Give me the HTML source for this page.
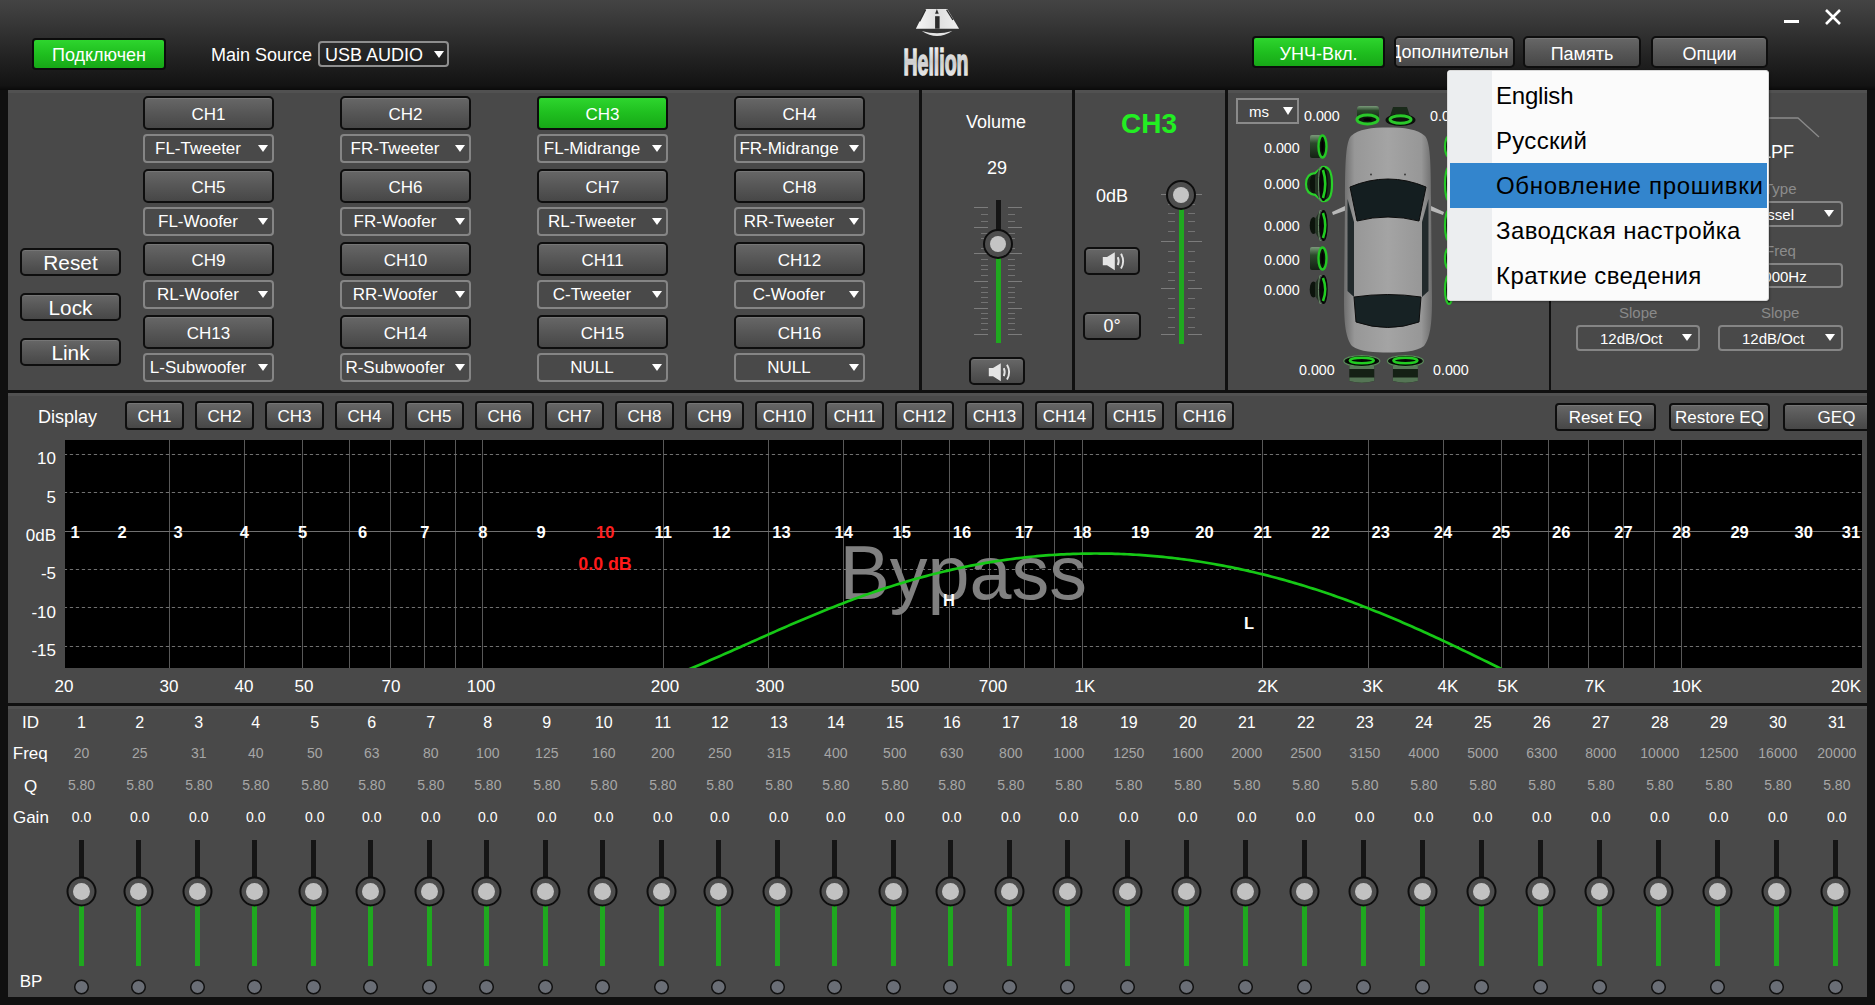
<!DOCTYPE html><html><head><meta charset="utf-8"><title>DSP</title><style>

*{box-sizing:border-box}
html,body{margin:0;padding:0}
body{width:1875px;height:1005px;overflow:hidden;position:relative;background:#101010;font-family:"Liberation Sans", sans-serif;color:#fff}
.abs{position:absolute}
.hdr{position:absolute;left:0;top:0;width:1875px;height:90px;background:linear-gradient(#444444 0%,#393939 22%,#2d2d2d 44%,#1f1f1f 70%,#131313 95%,#0a0a0a 100%)}
.panel{position:absolute;background:#494949;box-shadow:inset 0 3px 0 #515151}
.btn{position:absolute;border:2px solid #0e0e0e;border-radius:5px;background:linear-gradient(#676767 0%,#585858 45%,#474747 100%);box-shadow:inset 0 1px 0 rgba(255,255,255,0.1);color:#fff;text-align:center;white-space:nowrap;overflow:hidden}
.btn span{position:absolute;left:0;right:0;top:50%;transform:translateY(-50%);line-height:1}
.gbtn{position:absolute;border:2px solid #0c0c0c;border-radius:4px;background:linear-gradient(#2ed52e 0%,#1fbf1f 50%,#17a817 100%);color:#fff;text-align:center;white-space:nowrap}
.gbtn span{position:absolute;left:0;right:0;top:50%;transform:translateY(-50%);line-height:1}
.sel{position:absolute;border:2px solid #858585;border-radius:4px;color:#fff;white-space:nowrap}
.sel span{position:absolute;top:50%;transform:translateY(-50%);line-height:1}
.tri{position:absolute;width:0;height:0;border-left:5px solid transparent;border-right:5px solid transparent;border-top:7px solid #fff}
.t{position:absolute;white-space:nowrap;line-height:1}

</style></head><body>
<div class="hdr"></div>
<div class="gbtn" style="left:32px;top:38px;width:134px;height:32px;font-size:18px"><span style="margin-top:1px">Подключен</span></div>
<div class="t" style="left:211px;top:46px;font-size:18px">Main Source</div>
<div class="sel" style="left:318px;top:41px;width:131px;height:26px;border-color:#8e8e8e"><span style="left:5px;font-size:18px;margin-top:1px">USB AUDIO</span><div class="tri" style="left:114px;top:8px;border-top-width:7px"></div></div>
<svg class="abs" style="left:900px;top:0px" width="80" height="80" viewBox="900 0 80 80">
<defs><linearGradient id="lg1" x1="0" y1="0" x2="1" y2="0"><stop offset="0" stop-color="#f6f6f6"/><stop offset="0.5" stop-color="#dedede"/><stop offset="1" stop-color="#f0f0f0"/></linearGradient>
<linearGradient id="lg2" x1="0" y1="0" x2="0" y2="1"><stop offset="0" stop-color="#ffffff"/><stop offset="0.5" stop-color="#cfcfcf"/><stop offset="1" stop-color="#f2f2f2"/></linearGradient></defs>
<path d="M925.8 9 L947.3 9 L959.1 28.7 L915.9 28.7 Z" fill="url(#lg1)"/>
<path d="M925 9.4 L919 21.2 L920.3 21.6 L926.3 9.8 Z" fill="#2a2a2a"/>
<path d="M947.2 9.4 L953.6 19.7 L952.4 20.2 L946 9.9 Z" fill="#2a2a2a"/>
<path d="M935.1 13.7 L936.9 9 L938.7 13.7 Z" fill="#2a2a2a"/>
<rect x="935.1" y="16.2" width="4.5" height="12.5" fill="#2a2a2a"/>
<path d="M921.8 30.9 Q937 35.5 952.3 30.9 Q937 41 921.8 30.9 Z" fill="#e4e4e4"/>
<text x="936" y="74.8" text-anchor="middle" font-family="Liberation Sans" font-weight="bold" font-size="37.5" fill="url(#lg2)" stroke="url(#lg2)" stroke-width="1.6" transform="translate(936 0) scale(0.52 1) translate(-936 0)">Hellion</text>
</svg>
<div class="gbtn" style="left:1252px;top:36px;width:133px;height:32px;font-size:18px"><span style="margin-top:1.5px">УНЧ-Вкл.</span></div>
<div class="btn" style="left:1394px;top:36px;width:121px;height:32px;font-size:18px"><span style="left:-7px;right:auto;width:160px;text-align:left">Дополнительн</span></div>
<div class="btn" style="left:1523px;top:36px;width:118px;height:32px;font-size:18px"><span style="margin-top:1.5px">Память</span></div>
<div class="btn" style="left:1651px;top:36px;width:117px;height:32px;font-size:18px"><span style="margin-top:1.5px">Опции</span></div>
<div class="abs" style="left:1784px;top:20px;width:15px;height:3px;background:#fff"></div>
<svg class="abs" style="left:1824px;top:8px" width="18" height="18" viewBox="0 0 18 18"><path d="M2 2 L16 16 M16 2 L2 16" stroke="#fff" stroke-width="2.6"/></svg>
<div class="panel" style="left:8px;top:90px;width:911px;height:300px"></div>
<div class="panel" style="left:922px;top:90px;width:150px;height:300px"></div>
<div class="panel" style="left:1075px;top:90px;width:150px;height:300px"></div>
<div class="panel" style="left:1228px;top:90px;width:321px;height:300px"></div>
<div class="panel" style="left:1551px;top:90px;width:316px;height:300px"></div>
<div class="panel" style="left:8px;top:393px;width:1859px;height:310px"></div>
<div class="panel" style="left:8px;top:706px;width:1859px;height:291px"></div>
<div class="btn" style="left:20px;top:248px;width:101px;height:28px;font-size:20.8px"><span style="margin-top:0.5px">Reset</span></div>
<div class="btn" style="left:20px;top:293px;width:101px;height:28px;font-size:20.8px"><span style="margin-top:0.5px">Lock</span></div>
<div class="btn" style="left:20px;top:338px;width:101px;height:28px;font-size:20.8px"><span style="margin-top:0.5px">Link</span></div>
<div class="btn" style="left:143px;top:96px;width:131px;height:34px;font-size:17px"><span style="margin-top:0.5px">CH1</span></div>
<div class="sel" style="left:143px;top:134px;width:131px;height:29px"><span style="left:-1px;width:108px;text-align:center;font-size:17px;margin-top:-1px">FL-Tweeter</span><div class="tri" style="left:113px;top:9px"></div></div>
<div class="btn" style="left:340px;top:96px;width:131px;height:34px;font-size:17px"><span style="margin-top:0.5px">CH2</span></div>
<div class="sel" style="left:340px;top:134px;width:131px;height:29px"><span style="left:-1px;width:108px;text-align:center;font-size:17px;margin-top:-1px">FR-Tweeter</span><div class="tri" style="left:113px;top:9px"></div></div>
<div class="gbtn" style="left:537px;top:96px;width:131px;height:34px;font-size:17px"><span style="margin-top:0.5px">CH3</span></div>
<div class="sel" style="left:537px;top:134px;width:131px;height:29px"><span style="left:-1px;width:108px;text-align:center;font-size:17px;margin-top:-1px">FL-Midrange</span><div class="tri" style="left:113px;top:9px"></div></div>
<div class="btn" style="left:734px;top:96px;width:131px;height:34px;font-size:17px"><span style="margin-top:0.5px">CH4</span></div>
<div class="sel" style="left:734px;top:134px;width:131px;height:29px"><span style="left:-1px;width:108px;text-align:center;font-size:17px;margin-top:-1px">FR-Midrange</span><div class="tri" style="left:113px;top:9px"></div></div>
<div class="btn" style="left:143px;top:169px;width:131px;height:34px;font-size:17px"><span style="margin-top:0.5px">CH5</span></div>
<div class="sel" style="left:143px;top:207px;width:131px;height:29px"><span style="left:-1px;width:108px;text-align:center;font-size:17px;margin-top:-1px">FL-Woofer</span><div class="tri" style="left:113px;top:9px"></div></div>
<div class="btn" style="left:340px;top:169px;width:131px;height:34px;font-size:17px"><span style="margin-top:0.5px">CH6</span></div>
<div class="sel" style="left:340px;top:207px;width:131px;height:29px"><span style="left:-1px;width:108px;text-align:center;font-size:17px;margin-top:-1px">FR-Woofer</span><div class="tri" style="left:113px;top:9px"></div></div>
<div class="btn" style="left:537px;top:169px;width:131px;height:34px;font-size:17px"><span style="margin-top:0.5px">CH7</span></div>
<div class="sel" style="left:537px;top:207px;width:131px;height:29px"><span style="left:-1px;width:108px;text-align:center;font-size:17px;margin-top:-1px">RL-Tweeter</span><div class="tri" style="left:113px;top:9px"></div></div>
<div class="btn" style="left:734px;top:169px;width:131px;height:34px;font-size:17px"><span style="margin-top:0.5px">CH8</span></div>
<div class="sel" style="left:734px;top:207px;width:131px;height:29px"><span style="left:-1px;width:108px;text-align:center;font-size:17px;margin-top:-1px">RR-Tweeter</span><div class="tri" style="left:113px;top:9px"></div></div>
<div class="btn" style="left:143px;top:242px;width:131px;height:34px;font-size:17px"><span style="margin-top:0.5px">CH9</span></div>
<div class="sel" style="left:143px;top:280px;width:131px;height:29px"><span style="left:-1px;width:108px;text-align:center;font-size:17px;margin-top:-1px">RL-Woofer</span><div class="tri" style="left:113px;top:9px"></div></div>
<div class="btn" style="left:340px;top:242px;width:131px;height:34px;font-size:17px"><span style="margin-top:0.5px">CH10</span></div>
<div class="sel" style="left:340px;top:280px;width:131px;height:29px"><span style="left:-1px;width:108px;text-align:center;font-size:17px;margin-top:-1px">RR-Woofer</span><div class="tri" style="left:113px;top:9px"></div></div>
<div class="btn" style="left:537px;top:242px;width:131px;height:34px;font-size:17px"><span style="margin-top:0.5px">CH11</span></div>
<div class="sel" style="left:537px;top:280px;width:131px;height:29px"><span style="left:-1px;width:108px;text-align:center;font-size:17px;margin-top:-1px">C-Tweeter</span><div class="tri" style="left:113px;top:9px"></div></div>
<div class="btn" style="left:734px;top:242px;width:131px;height:34px;font-size:17px"><span style="margin-top:0.5px">CH12</span></div>
<div class="sel" style="left:734px;top:280px;width:131px;height:29px"><span style="left:-1px;width:108px;text-align:center;font-size:17px;margin-top:-1px">C-Woofer</span><div class="tri" style="left:113px;top:9px"></div></div>
<div class="btn" style="left:143px;top:315px;width:131px;height:34px;font-size:17px"><span style="margin-top:0.5px">CH13</span></div>
<div class="sel" style="left:143px;top:353px;width:131px;height:29px"><span style="left:-1px;width:108px;text-align:center;font-size:17px;margin-top:-1px">L-Subwoofer</span><div class="tri" style="left:113px;top:9px"></div></div>
<div class="btn" style="left:340px;top:315px;width:131px;height:34px;font-size:17px"><span style="margin-top:0.5px">CH14</span></div>
<div class="sel" style="left:340px;top:353px;width:131px;height:29px"><span style="left:-1px;width:108px;text-align:center;font-size:17px;margin-top:-1px">R-Subwoofer</span><div class="tri" style="left:113px;top:9px"></div></div>
<div class="btn" style="left:537px;top:315px;width:131px;height:34px;font-size:17px"><span style="margin-top:0.5px">CH15</span></div>
<div class="sel" style="left:537px;top:353px;width:131px;height:29px"><span style="left:-1px;width:108px;text-align:center;font-size:17px;margin-top:-1px">NULL</span><div class="tri" style="left:113px;top:9px"></div></div>
<div class="btn" style="left:734px;top:315px;width:131px;height:34px;font-size:17px"><span style="margin-top:0.5px">CH16</span></div>
<div class="sel" style="left:734px;top:353px;width:131px;height:29px"><span style="left:-1px;width:108px;text-align:center;font-size:17px;margin-top:-1px">NULL</span><div class="tri" style="left:113px;top:9px"></div></div>
<div class="t" style="left:966px;top:113px;font-size:18px">Volume</div>
<div class="t" style="left:987px;top:159px;font-size:18px">29</div>
<div class="abs" style="left:974px;top:207px;width:14px;height:1px;background:#7c7c7c"></div><div class="abs" style="left:1008px;top:207px;width:14px;height:1px;background:#7c7c7c"></div><div class="abs" style="left:974px;top:227px;width:14px;height:1px;background:#7c7c7c"></div><div class="abs" style="left:1008px;top:227px;width:14px;height:1px;background:#7c7c7c"></div><div class="abs" style="left:974px;top:253px;width:14px;height:1px;background:#7c7c7c"></div><div class="abs" style="left:1008px;top:253px;width:14px;height:1px;background:#7c7c7c"></div><div class="abs" style="left:974px;top:281px;width:14px;height:1px;background:#7c7c7c"></div><div class="abs" style="left:1008px;top:281px;width:14px;height:1px;background:#7c7c7c"></div><div class="abs" style="left:974px;top:308px;width:14px;height:1px;background:#7c7c7c"></div><div class="abs" style="left:1008px;top:308px;width:14px;height:1px;background:#7c7c7c"></div><div class="abs" style="left:974px;top:334px;width:14px;height:1px;background:#7c7c7c"></div><div class="abs" style="left:1008px;top:334px;width:14px;height:1px;background:#7c7c7c"></div><div class="abs" style="left:981px;top:214px;width:7px;height:1px;background:#727272"></div><div class="abs" style="left:1008px;top:214px;width:7px;height:1px;background:#727272"></div><div class="abs" style="left:981px;top:221px;width:7px;height:1px;background:#727272"></div><div class="abs" style="left:1008px;top:221px;width:7px;height:1px;background:#727272"></div><div class="abs" style="left:981px;top:233px;width:7px;height:1px;background:#727272"></div><div class="abs" style="left:1008px;top:233px;width:7px;height:1px;background:#727272"></div><div class="abs" style="left:981px;top:238px;width:7px;height:1px;background:#727272"></div><div class="abs" style="left:1008px;top:238px;width:7px;height:1px;background:#727272"></div><div class="abs" style="left:981px;top:248px;width:7px;height:1px;background:#727272"></div><div class="abs" style="left:1008px;top:248px;width:7px;height:1px;background:#727272"></div><div class="abs" style="left:981px;top:259px;width:7px;height:1px;background:#727272"></div><div class="abs" style="left:1008px;top:259px;width:7px;height:1px;background:#727272"></div><div class="abs" style="left:981px;top:265px;width:7px;height:1px;background:#727272"></div><div class="abs" style="left:1008px;top:265px;width:7px;height:1px;background:#727272"></div><div class="abs" style="left:981px;top:269px;width:7px;height:1px;background:#727272"></div><div class="abs" style="left:1008px;top:269px;width:7px;height:1px;background:#727272"></div><div class="abs" style="left:981px;top:275px;width:7px;height:1px;background:#727272"></div><div class="abs" style="left:1008px;top:275px;width:7px;height:1px;background:#727272"></div><div class="abs" style="left:981px;top:287px;width:7px;height:1px;background:#727272"></div><div class="abs" style="left:1008px;top:287px;width:7px;height:1px;background:#727272"></div><div class="abs" style="left:981px;top:292px;width:7px;height:1px;background:#727272"></div><div class="abs" style="left:1008px;top:292px;width:7px;height:1px;background:#727272"></div><div class="abs" style="left:981px;top:297px;width:7px;height:1px;background:#727272"></div><div class="abs" style="left:1008px;top:297px;width:7px;height:1px;background:#727272"></div><div class="abs" style="left:981px;top:302px;width:7px;height:1px;background:#727272"></div><div class="abs" style="left:1008px;top:302px;width:7px;height:1px;background:#727272"></div><div class="abs" style="left:981px;top:313px;width:7px;height:1px;background:#727272"></div><div class="abs" style="left:1008px;top:313px;width:7px;height:1px;background:#727272"></div><div class="abs" style="left:981px;top:318px;width:7px;height:1px;background:#727272"></div><div class="abs" style="left:1008px;top:318px;width:7px;height:1px;background:#727272"></div><div class="abs" style="left:981px;top:323px;width:7px;height:1px;background:#727272"></div><div class="abs" style="left:1008px;top:323px;width:7px;height:1px;background:#727272"></div><div class="abs" style="left:981px;top:329px;width:7px;height:1px;background:#727272"></div><div class="abs" style="left:1008px;top:329px;width:7px;height:1px;background:#727272"></div>
<div class="abs" style="left:996px;top:200px;width:5px;height:44px;background:#151515"></div>
<div class="abs" style="left:996px;top:244px;width:5px;height:99px;background:#1fa81f"></div>
<div class="abs" style="left:983px;top:229px;width:30px;height:30px;border-radius:50%;background:#4d4d4d;border:2.5px solid #0e0e0e"></div>
<div class="abs" style="left:990px;top:236px;width:16px;height:16px;border-radius:50%;background:#c4c4c4"></div>
<div class="btn" style="left:969px;top:357px;width:56px;height:28px"><div class="abs" style="left:17px;top:3.5px"><svg width="26" height="19" viewBox="0 0 26 19"><path d="M0.8 5 L5 5 L12.8 0.2 L12.8 18.3 L5 13.3 L0.8 13.3 Z" fill="#e4e4e4"/><path d="M15.8 5.2 Q17.6 9.2 15.8 13.2" stroke="#e4e4e4" stroke-width="1.9" fill="none"/><path d="M19 1.8 Q23.3 9.2 19 16.6" stroke="#e4e4e4" stroke-width="1.9" fill="none"/></svg></div></div>
<div class="t" style="left:1121px;top:110px;font-size:28px;font-weight:bold;color:#22ee22">CH3</div>
<div class="t" style="left:1096px;top:187px;font-size:18px">0dB</div>
<div class="abs" style="left:1161.0px;top:194px;width:14px;height:1px;background:#7c7c7c"></div><div class="abs" style="left:1188.0px;top:194px;width:14px;height:1px;background:#7c7c7c"></div><div class="abs" style="left:1161.0px;top:241px;width:14px;height:1px;background:#7c7c7c"></div><div class="abs" style="left:1188.0px;top:241px;width:14px;height:1px;background:#7c7c7c"></div><div class="abs" style="left:1161.0px;top:288px;width:14px;height:1px;background:#7c7c7c"></div><div class="abs" style="left:1188.0px;top:288px;width:14px;height:1px;background:#7c7c7c"></div><div class="abs" style="left:1161.0px;top:334px;width:14px;height:1px;background:#7c7c7c"></div><div class="abs" style="left:1188.0px;top:334px;width:14px;height:1px;background:#7c7c7c"></div><div class="abs" style="left:1168.0px;top:204px;width:7px;height:1px;background:#727272"></div><div class="abs" style="left:1188.0px;top:204px;width:7px;height:1px;background:#727272"></div><div class="abs" style="left:1168.0px;top:213px;width:7px;height:1px;background:#727272"></div><div class="abs" style="left:1188.0px;top:213px;width:7px;height:1px;background:#727272"></div><div class="abs" style="left:1168.0px;top:221px;width:7px;height:1px;background:#727272"></div><div class="abs" style="left:1188.0px;top:221px;width:7px;height:1px;background:#727272"></div><div class="abs" style="left:1168.0px;top:231px;width:7px;height:1px;background:#727272"></div><div class="abs" style="left:1188.0px;top:231px;width:7px;height:1px;background:#727272"></div><div class="abs" style="left:1168.0px;top:251px;width:7px;height:1px;background:#727272"></div><div class="abs" style="left:1188.0px;top:251px;width:7px;height:1px;background:#727272"></div><div class="abs" style="left:1168.0px;top:261px;width:7px;height:1px;background:#727272"></div><div class="abs" style="left:1188.0px;top:261px;width:7px;height:1px;background:#727272"></div><div class="abs" style="left:1168.0px;top:272px;width:7px;height:1px;background:#727272"></div><div class="abs" style="left:1188.0px;top:272px;width:7px;height:1px;background:#727272"></div><div class="abs" style="left:1168.0px;top:280px;width:7px;height:1px;background:#727272"></div><div class="abs" style="left:1188.0px;top:280px;width:7px;height:1px;background:#727272"></div><div class="abs" style="left:1168.0px;top:298px;width:7px;height:1px;background:#727272"></div><div class="abs" style="left:1188.0px;top:298px;width:7px;height:1px;background:#727272"></div><div class="abs" style="left:1168.0px;top:308px;width:7px;height:1px;background:#727272"></div><div class="abs" style="left:1188.0px;top:308px;width:7px;height:1px;background:#727272"></div><div class="abs" style="left:1168.0px;top:317px;width:7px;height:1px;background:#727272"></div><div class="abs" style="left:1188.0px;top:317px;width:7px;height:1px;background:#727272"></div><div class="abs" style="left:1168.0px;top:327px;width:7px;height:1px;background:#727272"></div><div class="abs" style="left:1188.0px;top:327px;width:7px;height:1px;background:#727272"></div>
<div class="abs" style="left:1179px;top:195px;width:5px;height:149px;background:#1fa81f"></div>
<div class="abs" style="left:1166px;top:180px;width:30px;height:30px;border-radius:50%;background:#4d4d4d;border:2.5px solid #0e0e0e"></div>
<div class="abs" style="left:1173px;top:187px;width:16px;height:16px;border-radius:50%;background:#c4c4c4"></div>
<div class="btn" style="left:1084px;top:247px;width:56px;height:28px"><div class="abs" style="left:16px;top:3px"><svg width="26" height="19" viewBox="0 0 26 19"><path d="M0.8 5 L5 5 L12.8 0.2 L12.8 18.3 L5 13.3 L0.8 13.3 Z" fill="#e4e4e4"/><path d="M15.8 5.2 Q17.6 9.2 15.8 13.2" stroke="#e4e4e4" stroke-width="1.9" fill="none"/><path d="M19 1.8 Q23.3 9.2 19 16.6" stroke="#e4e4e4" stroke-width="1.9" fill="none"/></svg></div></div>
<div class="btn" style="left:1083px;top:312px;width:58px;height:28px;font-size:18px"><span>0°</span></div>
<div class="sel" style="left:1236px;top:98px;width:63px;height:26px;border-color:#8a8a8a;border-radius:0"><span style="left:11px;font-size:15px">ms</span><div class="tri" style="left:45px;top:6.5px;border-top-width:8px"></div></div>
<div class="t" style="left:1304px;top:109px;font-size:14.3px">0.000</div>
<div class="t" style="left:1430px;top:109px;font-size:14.3px">0.000</div>
<div class="t" style="left:1264px;top:141px;font-size:14.3px">0.000</div>
<div class="t" style="left:1264px;top:177px;font-size:14.3px">0.000</div>
<div class="t" style="left:1264px;top:219px;font-size:14.3px">0.000</div>
<div class="t" style="left:1264px;top:253px;font-size:14.3px">0.000</div>
<div class="t" style="left:1264px;top:283px;font-size:14.3px">0.000</div>
<div class="t" style="left:1299px;top:363px;font-size:14.3px">0.000</div>
<div class="t" style="left:1433px;top:363px;font-size:14.3px">0.000</div>
<svg class="abs" style="left:1300px;top:95px" width="170" height="300" viewBox="1300 95 170 300">
<defs>
<linearGradient id="cg" x1="0" y1="0" x2="1" y2="0"><stop offset="0" stop-color="#6e6e6e"/><stop offset="0.12" stop-color="#979797"/><stop offset="0.5" stop-color="#a4a4a4"/><stop offset="0.88" stop-color="#979797"/><stop offset="1" stop-color="#6e6e6e"/></linearGradient>
<linearGradient id="sg" x1="0" y1="0" x2="0" y2="1"><stop offset="0" stop-color="#7a9a7a"/><stop offset="0.35" stop-color="#2c4a2c"/><stop offset="1" stop-color="#142214"/></linearGradient>
<linearGradient id="sg2" x1="0" y1="0" x2="1" y2="0"><stop offset="0" stop-color="#7a9a7a"/><stop offset="0.4" stop-color="#2c4a2c"/><stop offset="1" stop-color="#142214"/></linearGradient>
</defs>
<path d="M1345 206 L1332 212 L1333 215 L1347 210 Z" fill="#b8b8b8"/>
<path d="M1431 206 L1444 212 L1443 215 L1429 210 Z" fill="#b8b8b8"/>
<path d="M1388 127.5 C1372 127.5 1358 129 1351 136 C1346 142 1345 160 1345 200 L1344 300 C1344 325 1346 338 1352 346 C1360 352 1375 352.5 1388 352.5 C1401 352.5 1416 352 1424 346 C1430 338 1432 325 1432 300 L1431 200 C1431 160 1430 142 1425 136 C1418 129 1404 127.5 1388 127.5 Z" fill="url(#cg)"/>
<path d="M1350 187 Q1388 171 1426 187 L1419 221 Q1388 213 1357 221 Z" fill="#141e20" stroke="#0c0c0c" stroke-width="1"/>
<path d="M1347.5 199 L1354 222 L1354 297 L1347.5 291 Z" fill="#222a2c"/>
<path d="M1428.5 199 L1422 222 L1422 297 L1428.5 291 Z" fill="#222a2c"/>
<path d="M1354 297 Q1388 292 1421 297 L1419 322 Q1388 333 1356 322 Z" fill="#172224" stroke="#0c0c0c" stroke-width="1"/>
<circle cx="1371" cy="174.5" r="0.9" fill="#333"/><circle cx="1405" cy="174.5" r="0.9" fill="#333"/>

<rect x="1310" y="135" width="11" height="23" rx="2" fill="url(#sg)"/><ellipse cx="1322.5" cy="146.5" rx="4" ry="11.0" fill="#0a120a" stroke="#24c824" stroke-width="2.4"/><ellipse cx="1322.5" cy="146.5" rx="1.2" ry="6.5" fill="#000"/><path d="M1306 184.0 Q1306 173.92 1315 173.2 L1322 167 Q1332 165 1332 184.0 Q1332 203 1322 201 L1315 194.8 Q1306 194.08 1306 184.0 Z" fill="#1a2a1a" stroke="#2ad02a" stroke-width="2.2"/><ellipse cx="1313.5" cy="184.0" rx="3.8" ry="9.36" fill="#0c140c"/><path d="M1315 176.8 L1320 167.5 L1320 200.5 L1315 191.2 Z" fill="#243424"/><ellipse cx="1320.5" cy="184.0" rx="2" ry="17.0" fill="none" stroke="#6a8a6a" stroke-width="1"/><ellipse cx="1323.5" cy="184.0" rx="3.6" ry="16.5" fill="#060806" stroke="#080808" stroke-width="1.2"/><path d="M1323 170 Q1327.5 184.0 1323 198" fill="none" stroke="#22cc22" stroke-width="2.6"/><ellipse cx="1313.5" cy="225.5" rx="3.8" ry="8.58" fill="#0c140c"/><path d="M1315 218.9 L1320 210.5 L1320 240.5 L1315 232.1 Z" fill="#243424"/><ellipse cx="1320.5" cy="225.5" rx="2" ry="15.5" fill="none" stroke="#6a8a6a" stroke-width="1"/><ellipse cx="1323.5" cy="225.5" rx="3.6" ry="15.0" fill="#060806" stroke="#080808" stroke-width="1.2"/><path d="M1323 213 Q1327.5 225.5 1323 238" fill="none" stroke="#22cc22" stroke-width="2.6"/><rect x="1310" y="247" width="11" height="23" rx="2" fill="url(#sg)"/><ellipse cx="1322.5" cy="258.5" rx="4" ry="11.0" fill="#0a120a" stroke="#24c824" stroke-width="2.4"/><ellipse cx="1322.5" cy="258.5" rx="1.2" ry="6.5" fill="#000"/><ellipse cx="1313.5" cy="289.5" rx="3.8" ry="8.06" fill="#0c140c"/><path d="M1315 283.3 L1320 275.5 L1320 303.5 L1315 295.7 Z" fill="#243424"/><ellipse cx="1320.5" cy="289.5" rx="2" ry="14.5" fill="none" stroke="#6a8a6a" stroke-width="1"/><ellipse cx="1323.5" cy="289.5" rx="3.6" ry="14.0" fill="#060806" stroke="#080808" stroke-width="1.2"/><path d="M1323 278 Q1327.5 289.5 1323 301" fill="none" stroke="#22cc22" stroke-width="2.6"/><ellipse cx="1449" cy="146.5" rx="4" ry="10.5" fill="#0c140c" stroke="#24c824" stroke-width="2.2"/><ellipse cx="1449" cy="184.0" rx="4" ry="17.0" fill="#0c140c" stroke="#24c824" stroke-width="2.2"/><ellipse cx="1449" cy="225.5" rx="4" ry="15.5" fill="#0c140c" stroke="#24c824" stroke-width="2.2"/><ellipse cx="1449" cy="258.5" rx="4" ry="10.5" fill="#0c140c" stroke="#24c824" stroke-width="2.2"/><ellipse cx="1449" cy="289.5" rx="4" ry="14.5" fill="#0c140c" stroke="#24c824" stroke-width="2.2"/><rect x="1357" y="106" width="22" height="13" rx="3" fill="url(#sg)"/><ellipse cx="1367.5" cy="119.5" rx="10.5" ry="4.5" fill="#0c140c" stroke="#2ac82a" stroke-width="3"/><ellipse cx="1367.5" cy="119.5" rx="4" ry="1.5" fill="#000"/><path d="M1393 107 L1407 107 L1410 116 L1390 116 Z" fill="#1a2a1a"/><ellipse cx="1400.5" cy="120" rx="15" ry="6" fill="#0a0f0a"/><ellipse cx="1400.5" cy="119.5" rx="10.5" ry="3.8" fill="#0c140c" stroke="#2ac82a" stroke-width="3"/><path d="M1349.3 365 L1374.3 365 L1374.3 381 Q1361.8 384.5 1349.3 381 Z" fill="#142014"/><rect x="1349.3" y="365.5" width="25" height="3.5" fill="#5a7a5a"/><path d="M1349.3 377.5 L1374.3 377.5 L1374.3 381 Q1361.8 384.5 1349.3 381 Z" fill="#557555"/><ellipse cx="1361.8" cy="361" rx="18" ry="5.5" fill="#0a120a" stroke="#5a8a5a" stroke-width="1.2"/><ellipse cx="1361.8" cy="361" rx="15.5" ry="4.3" fill="#050505"/><ellipse cx="1361.8" cy="360.5" rx="12" ry="2.8" fill="none" stroke="#22cc22" stroke-width="2.6"/><path d="M1392.9 365 L1417.9 365 L1417.9 381 Q1405.4 384.5 1392.9 381 Z" fill="#142014"/><rect x="1392.9" y="365.5" width="25" height="3.5" fill="#5a7a5a"/><path d="M1392.9 377.5 L1417.9 377.5 L1417.9 381 Q1405.4 384.5 1392.9 381 Z" fill="#557555"/><ellipse cx="1405.4" cy="361" rx="18" ry="5.5" fill="#0a120a" stroke="#5a8a5a" stroke-width="1.2"/><ellipse cx="1405.4" cy="361" rx="15.5" ry="4.3" fill="#050505"/><ellipse cx="1405.4" cy="360.5" rx="12" ry="2.8" fill="none" stroke="#22cc22" stroke-width="2.6"/></svg>
<svg class="abs" style="left:1760px;top:110px" width="70" height="35"><path d="M0 8 L38 8 L59 27" stroke="#8a8a8a" stroke-width="1.3" fill="none"/></svg>
<div class="t" style="left:1761px;top:143px;font-size:18px">LPF</div>
<div class="t" style="left:1764px;top:181px;font-size:15px;color:#8c8c8c">Type</div>
<div class="sel" style="left:1718px;top:201px;width:125px;height:26px"><span style="left:29px;font-size:15px">Bessel</span><div class="tri" style="left:104px;top:7px"></div></div>
<div class="t" style="left:1765px;top:243px;font-size:15px;color:#8c8c8c">Freq</div>
<div class="sel" style="left:1718px;top:263px;width:125px;height:25px"><span style="left:35px;font-size:15px">2000Hz</span></div>
<div class="t" style="left:1619px;top:305px;font-size:15px;color:#8a8a8a">Slope</div>
<div class="t" style="left:1761px;top:305px;font-size:15px;color:#8a8a8a">Slope</div>
<div class="sel" style="left:1576px;top:325px;width:124px;height:26px"><span style="left:22px;font-size:15px">12dB/Oct</span><div class="tri" style="left:104px;top:7px"></div></div>
<div class="sel" style="left:1718px;top:325px;width:125px;height:26px"><span style="left:22px;font-size:15px">12dB/Oct</span><div class="tri" style="left:105px;top:7px"></div></div>
<div class="abs" style="left:1447px;top:70px;width:322px;height:231px;background:#fbfbfb;border:1px solid #d8d8d8;border-radius:3px;box-shadow:1px 1px 2px rgba(0,0,0,0.3)"></div>
<div class="abs" style="left:1448px;top:71px;width:44px;height:229px;background:#eceef0"></div>
<div class="abs" style="left:1450px;top:163px;width:317px;height:45px;background:#3385cd"></div>
<div class="t" style="left:1496px;top:84px;font-size:24px;color:#000;letter-spacing:-0.2px">English</div>
<div class="t" style="left:1496px;top:129px;font-size:24px;color:#000;letter-spacing:0.3px">Русский</div>
<div class="t" style="left:1496px;top:174px;font-size:24px;color:#000;letter-spacing:0.7px">Обновление прошивки</div>
<div class="t" style="left:1496px;top:219px;font-size:24px;color:#000;letter-spacing:0.4px">Заводская настройка</div>
<div class="t" style="left:1496px;top:264px;font-size:24px;color:#000;letter-spacing:0.4px">Краткие сведения</div>
<div class="t" style="left:38px;top:408px;font-size:18px">Display</div>
<div class="btn" style="left:125px;top:401px;width:59px;height:29px;font-size:17px;border-radius:4px"><span>CH1</span></div>
<div class="btn" style="left:195px;top:401px;width:59px;height:29px;font-size:17px;border-radius:4px"><span>CH2</span></div>
<div class="btn" style="left:265px;top:401px;width:59px;height:29px;font-size:17px;border-radius:4px"><span>CH3</span></div>
<div class="btn" style="left:335px;top:401px;width:59px;height:29px;font-size:17px;border-radius:4px"><span>CH4</span></div>
<div class="btn" style="left:405px;top:401px;width:59px;height:29px;font-size:17px;border-radius:4px"><span>CH5</span></div>
<div class="btn" style="left:475px;top:401px;width:59px;height:29px;font-size:17px;border-radius:4px"><span>CH6</span></div>
<div class="btn" style="left:545px;top:401px;width:59px;height:29px;font-size:17px;border-radius:4px"><span>CH7</span></div>
<div class="btn" style="left:615px;top:401px;width:59px;height:29px;font-size:17px;border-radius:4px"><span>CH8</span></div>
<div class="btn" style="left:685px;top:401px;width:59px;height:29px;font-size:17px;border-radius:4px"><span>CH9</span></div>
<div class="btn" style="left:755px;top:401px;width:59px;height:29px;font-size:17px;border-radius:4px"><span>CH10</span></div>
<div class="btn" style="left:825px;top:401px;width:59px;height:29px;font-size:17px;border-radius:4px"><span>CH11</span></div>
<div class="btn" style="left:895px;top:401px;width:59px;height:29px;font-size:17px;border-radius:4px"><span>CH12</span></div>
<div class="btn" style="left:965px;top:401px;width:59px;height:29px;font-size:17px;border-radius:4px"><span>CH13</span></div>
<div class="btn" style="left:1035px;top:401px;width:59px;height:29px;font-size:17px;border-radius:4px"><span>CH14</span></div>
<div class="btn" style="left:1105px;top:401px;width:59px;height:29px;font-size:17px;border-radius:4px"><span>CH15</span></div>
<div class="btn" style="left:1175px;top:401px;width:59px;height:29px;font-size:17px;border-radius:4px"><span>CH16</span></div>
<div class="btn" style="left:1555px;top:403px;width:101px;height:28px;font-size:17px;border-radius:4px"><span>Reset EQ</span></div>
<div class="btn" style="left:1669px;top:403px;width:101px;height:28px;font-size:17px;border-radius:4px"><span>Restore EQ</span></div>
<div class="btn" style="left:1783px;top:403px;width:100px;height:28px;font-size:17px;border-radius:4px"><span style="left:0;right:auto;width:103px">GEQ</span></div>
<div class="abs" style="left:1867px;top:393px;width:8px;height:612px;background:#101010"></div>
<svg class="abs" style="left:0;top:0" width="1875" height="1005" viewBox="0 0 1875 1005"><rect x="65" y="440" width="1797" height="228" fill="#000"/><line x1="169.5" y1="440" x2="169.5" y2="668" stroke="#585858" stroke-width="1"/><line x1="244.5" y1="440" x2="244.5" y2="668" stroke="#585858" stroke-width="1"/><line x1="302.5" y1="440" x2="302.5" y2="668" stroke="#585858" stroke-width="1"/><line x1="349.5" y1="440" x2="349.5" y2="668" stroke="#585858" stroke-width="1"/><line x1="390.5" y1="440" x2="390.5" y2="668" stroke="#585858" stroke-width="1"/><line x1="424.5" y1="440" x2="424.5" y2="668" stroke="#585858" stroke-width="1"/><line x1="455.5" y1="440" x2="455.5" y2="668" stroke="#585858" stroke-width="1"/><line x1="482.5" y1="440" x2="482.5" y2="668" stroke="#585858" stroke-width="1"/><line x1="663.5" y1="440" x2="663.5" y2="668" stroke="#585858" stroke-width="1"/><line x1="768.5" y1="440" x2="768.5" y2="668" stroke="#585858" stroke-width="1"/><line x1="843.5" y1="440" x2="843.5" y2="668" stroke="#585858" stroke-width="1"/><line x1="901.5" y1="440" x2="901.5" y2="668" stroke="#585858" stroke-width="1"/><line x1="949.5" y1="440" x2="949.5" y2="668" stroke="#585858" stroke-width="1"/><line x1="989.5" y1="440" x2="989.5" y2="668" stroke="#585858" stroke-width="1"/><line x1="1024.5" y1="440" x2="1024.5" y2="668" stroke="#585858" stroke-width="1"/><line x1="1054.5" y1="440" x2="1054.5" y2="668" stroke="#585858" stroke-width="1"/><line x1="1082.5" y1="440" x2="1082.5" y2="668" stroke="#585858" stroke-width="1"/><line x1="1262.5" y1="440" x2="1262.5" y2="668" stroke="#585858" stroke-width="1"/><line x1="1368.5" y1="440" x2="1368.5" y2="668" stroke="#585858" stroke-width="1"/><line x1="1443.5" y1="440" x2="1443.5" y2="668" stroke="#585858" stroke-width="1"/><line x1="1501.5" y1="440" x2="1501.5" y2="668" stroke="#585858" stroke-width="1"/><line x1="1548.5" y1="440" x2="1548.5" y2="668" stroke="#585858" stroke-width="1"/><line x1="1588.5" y1="440" x2="1588.5" y2="668" stroke="#585858" stroke-width="1"/><line x1="1623.5" y1="440" x2="1623.5" y2="668" stroke="#585858" stroke-width="1"/><line x1="1654.5" y1="440" x2="1654.5" y2="668" stroke="#585858" stroke-width="1"/><line x1="1681.5" y1="440" x2="1681.5" y2="668" stroke="#585858" stroke-width="1"/><line x1="65" y1="454.5" x2="1862" y2="454.5" stroke="#707070" stroke-width="1" stroke-dasharray="3.3 2.7" stroke-dashoffset="1.2"/><line x1="65" y1="492.5" x2="1862" y2="492.5" stroke="#707070" stroke-width="1" stroke-dasharray="3.3 2.7" stroke-dashoffset="1.2"/><line x1="65" y1="569.5" x2="1862" y2="569.5" stroke="#707070" stroke-width="1" stroke-dasharray="3.3 2.7" stroke-dashoffset="1.2"/><line x1="65" y1="607.5" x2="1862" y2="607.5" stroke="#707070" stroke-width="1" stroke-dasharray="3.3 2.7" stroke-dashoffset="1.2"/><line x1="65" y1="646.5" x2="1862" y2="646.5" stroke="#707070" stroke-width="1" stroke-dasharray="3.3 2.7" stroke-dashoffset="1.2"/><line x1="65" y1="531.5" x2="1862" y2="531.5" stroke="#707070" stroke-width="1"/><text x="839.5" y="598.5" font-family="Liberation Sans" font-size="75.5" fill="#808080">Bypass</text><defs><clipPath id="plot"><rect x="65" y="440" width="1797" height="228"/></clipPath></defs><path d="M686.0 670.35 L689.0 669.14 L692.0 667.92 L695.0 666.69 L698.0 665.44 L701.0 664.18 L704.0 662.91 L707.0 661.64 L710.0 660.35 L713.0 659.06 L716.0 657.76 L719.0 656.45 L722.0 655.13 L725.0 653.82 L728.0 652.49 L731.0 651.16 L734.0 649.83 L737.0 648.50 L740.0 647.16 L743.0 645.82 L746.0 644.48 L749.0 643.14 L752.0 641.80 L755.0 640.46 L758.0 639.12 L761.0 637.78 L764.0 636.45 L767.0 635.11 L770.0 633.78 L773.0 632.45 L776.0 631.13 L779.0 629.81 L782.0 628.49 L785.0 627.18 L788.0 625.88 L791.0 624.58 L794.0 623.28 L797.0 622.00 L800.0 620.71 L803.0 619.44 L806.0 618.17 L809.0 616.91 L812.0 615.66 L815.0 614.42 L818.0 613.18 L821.0 611.96 L824.0 610.74 L827.0 609.53 L830.0 608.33 L833.0 607.14 L836.0 605.97 L839.0 604.80 L842.0 603.64 L845.0 602.49 L848.0 601.35 L851.0 600.23 L854.0 599.11 L857.0 598.01 L860.0 596.92 L863.0 595.84 L866.0 594.77 L869.0 593.71 L872.0 592.67 L875.0 591.64 L878.0 590.62 L881.0 589.61 L884.0 588.61 L887.0 587.63 L890.0 586.66 L893.0 585.71 L896.0 584.77 L899.0 583.84 L902.0 582.92 L905.0 582.02 L908.0 581.13 L911.0 580.25 L914.0 579.39 L917.0 578.54 L920.0 577.71 L923.0 576.89 L926.0 576.08 L929.0 575.29 L932.0 574.51 L935.0 573.74 L938.0 572.99 L941.0 572.25 L944.0 571.53 L947.0 570.82 L950.0 570.12 L953.0 569.44 L956.0 568.78 L959.0 568.13 L962.0 567.49 L965.0 566.86 L968.0 566.25 L971.0 565.66 L974.0 565.08 L977.0 564.51 L980.0 563.96 L983.0 563.42 L986.0 562.90 L989.0 562.39 L992.0 561.90 L995.0 561.41 L998.0 560.95 L1001.0 560.50 L1004.0 560.06 L1007.0 559.64 L1010.0 559.23 L1013.0 558.83 L1016.0 558.45 L1019.0 558.09 L1022.0 557.74 L1025.0 557.40 L1028.0 557.07 L1031.0 556.77 L1034.0 556.47 L1037.0 556.19 L1040.0 555.92 L1043.0 555.67 L1046.0 555.43 L1049.0 555.21 L1052.0 555.00 L1055.0 554.80 L1058.0 554.62 L1061.0 554.45 L1064.0 554.30 L1067.0 554.16 L1070.0 554.03 L1073.0 553.92 L1076.0 553.82 L1079.0 553.73 L1082.0 553.66 L1085.0 553.61 L1088.0 553.56 L1091.0 553.54 L1094.0 553.52 L1097.0 553.52 L1100.0 553.53 L1103.0 553.56 L1106.0 553.60 L1109.0 553.65 L1112.0 553.72 L1115.0 553.80 L1118.0 553.89 L1121.0 554.00 L1124.0 554.12 L1127.0 554.26 L1130.0 554.40 L1133.0 554.57 L1136.0 554.74 L1139.0 554.93 L1142.0 555.13 L1145.0 555.35 L1148.0 555.58 L1151.0 555.82 L1154.0 556.08 L1157.0 556.35 L1160.0 556.63 L1163.0 556.93 L1166.0 557.24 L1169.0 557.56 L1172.0 557.90 L1175.0 558.25 L1178.0 558.61 L1181.0 558.99 L1184.0 559.38 L1187.0 559.78 L1190.0 560.20 L1193.0 560.63 L1196.0 561.08 L1199.0 561.53 L1202.0 562.00 L1205.0 562.49 L1208.0 562.98 L1211.0 563.49 L1214.0 564.02 L1217.0 564.55 L1220.0 565.10 L1223.0 565.66 L1226.0 566.24 L1229.0 566.83 L1232.0 567.43 L1235.0 568.05 L1238.0 568.68 L1241.0 569.32 L1244.0 569.97 L1247.0 570.64 L1250.0 571.32 L1253.0 572.02 L1256.0 572.72 L1259.0 573.44 L1262.0 574.18 L1265.0 574.92 L1268.0 575.68 L1271.0 576.46 L1274.0 577.24 L1277.0 578.04 L1280.0 578.85 L1283.0 579.67 L1286.0 580.51 L1289.0 581.36 L1292.0 582.22 L1295.0 583.10 L1298.0 583.99 L1301.0 584.89 L1304.0 585.80 L1307.0 586.73 L1310.0 587.67 L1313.0 588.62 L1316.0 589.58 L1319.0 590.56 L1322.0 591.54 L1325.0 592.55 L1328.0 593.56 L1331.0 594.58 L1334.0 595.62 L1337.0 596.67 L1340.0 597.73 L1343.0 598.81 L1346.0 599.89 L1349.0 600.99 L1352.0 602.10 L1355.0 603.22 L1358.0 604.35 L1361.0 605.49 L1364.0 606.65 L1367.0 607.81 L1370.0 608.99 L1373.0 610.18 L1376.0 611.38 L1379.0 612.59 L1382.0 613.81 L1385.0 615.04 L1388.0 616.28 L1391.0 617.53 L1394.0 618.79 L1397.0 620.06 L1400.0 621.35 L1403.0 622.64 L1406.0 623.94 L1409.0 625.25 L1412.0 626.57 L1415.0 627.89 L1418.0 629.23 L1421.0 630.58 L1424.0 631.93 L1427.0 633.29 L1430.0 634.66 L1433.0 636.04 L1436.0 637.42 L1439.0 638.81 L1442.0 640.21 L1445.0 641.62 L1448.0 643.03 L1451.0 644.45 L1454.0 645.87 L1457.0 647.30 L1460.0 648.73 L1463.0 650.17 L1466.0 651.61 L1469.0 653.06 L1472.0 654.51 L1475.0 655.97 L1478.0 657.43 L1481.0 658.89 L1484.0 660.36 L1487.0 661.82 L1490.0 663.29 L1493.0 664.76 L1496.0 666.23 L1499.0 667.70 L1502.0 669.17 L1505.0 670.64" stroke="#16c816" stroke-width="2.7" fill="none" stroke-linejoin="round" clip-path="url(#plot)"/><text x="75.0" y="537.5" text-anchor="middle" font-family="Liberation Sans" font-weight="bold" font-size="16.5" fill="#fff">1</text><text x="122.1" y="537.5" text-anchor="middle" font-family="Liberation Sans" font-weight="bold" font-size="16.5" fill="#fff">2</text><text x="178.1" y="537.5" text-anchor="middle" font-family="Liberation Sans" font-weight="bold" font-size="16.5" fill="#fff">3</text><text x="244.4" y="537.5" text-anchor="middle" font-family="Liberation Sans" font-weight="bold" font-size="16.5" fill="#fff">4</text><text x="302.5" y="537.5" text-anchor="middle" font-family="Liberation Sans" font-weight="bold" font-size="16.5" fill="#fff">5</text><text x="362.6" y="537.5" text-anchor="middle" font-family="Liberation Sans" font-weight="bold" font-size="16.5" fill="#fff">6</text><text x="424.8" y="537.5" text-anchor="middle" font-family="Liberation Sans" font-weight="bold" font-size="16.5" fill="#fff">7</text><text x="482.9" y="537.5" text-anchor="middle" font-family="Liberation Sans" font-weight="bold" font-size="16.5" fill="#fff">8</text><text x="541.0" y="537.5" text-anchor="middle" font-family="Liberation Sans" font-weight="bold" font-size="16.5" fill="#fff">9</text><text x="605.2" y="537.5" text-anchor="middle" font-family="Liberation Sans" font-weight="bold" font-size="16.5" fill="#ff2020">10</text><text x="663.3" y="537.5" text-anchor="middle" font-family="Liberation Sans" font-weight="bold" font-size="16.5" fill="#fff">11</text><text x="721.4" y="537.5" text-anchor="middle" font-family="Liberation Sans" font-weight="bold" font-size="16.5" fill="#fff">12</text><text x="781.5" y="537.5" text-anchor="middle" font-family="Liberation Sans" font-weight="bold" font-size="16.5" fill="#fff">13</text><text x="843.7" y="537.5" text-anchor="middle" font-family="Liberation Sans" font-weight="bold" font-size="16.5" fill="#fff">14</text><text x="901.8" y="537.5" text-anchor="middle" font-family="Liberation Sans" font-weight="bold" font-size="16.5" fill="#fff">15</text><text x="961.9" y="537.5" text-anchor="middle" font-family="Liberation Sans" font-weight="bold" font-size="16.5" fill="#fff">16</text><text x="1024.1" y="537.5" text-anchor="middle" font-family="Liberation Sans" font-weight="bold" font-size="16.5" fill="#fff">17</text><text x="1082.2" y="537.5" text-anchor="middle" font-family="Liberation Sans" font-weight="bold" font-size="16.5" fill="#fff">18</text><text x="1140.3" y="537.5" text-anchor="middle" font-family="Liberation Sans" font-weight="bold" font-size="16.5" fill="#fff">19</text><text x="1204.5" y="537.5" text-anchor="middle" font-family="Liberation Sans" font-weight="bold" font-size="16.5" fill="#fff">20</text><text x="1262.6" y="537.5" text-anchor="middle" font-family="Liberation Sans" font-weight="bold" font-size="16.5" fill="#fff">21</text><text x="1320.7" y="537.5" text-anchor="middle" font-family="Liberation Sans" font-weight="bold" font-size="16.5" fill="#fff">22</text><text x="1380.8" y="537.5" text-anchor="middle" font-family="Liberation Sans" font-weight="bold" font-size="16.5" fill="#fff">23</text><text x="1443.0" y="537.5" text-anchor="middle" font-family="Liberation Sans" font-weight="bold" font-size="16.5" fill="#fff">24</text><text x="1501.1" y="537.5" text-anchor="middle" font-family="Liberation Sans" font-weight="bold" font-size="16.5" fill="#fff">25</text><text x="1561.2" y="537.5" text-anchor="middle" font-family="Liberation Sans" font-weight="bold" font-size="16.5" fill="#fff">26</text><text x="1623.4" y="537.5" text-anchor="middle" font-family="Liberation Sans" font-weight="bold" font-size="16.5" fill="#fff">27</text><text x="1681.5" y="537.5" text-anchor="middle" font-family="Liberation Sans" font-weight="bold" font-size="16.5" fill="#fff">28</text><text x="1739.6" y="537.5" text-anchor="middle" font-family="Liberation Sans" font-weight="bold" font-size="16.5" fill="#fff">29</text><text x="1803.8" y="537.5" text-anchor="middle" font-family="Liberation Sans" font-weight="bold" font-size="16.5" fill="#fff">30</text><text x="1851.0" y="537.5" text-anchor="middle" font-family="Liberation Sans" font-weight="bold" font-size="16.5" fill="#fff">31</text><text x="605" y="570" text-anchor="middle" font-family="Liberation Sans" font-weight="bold" font-size="17.8" fill="#ff1a1a">0.0 dB</text><text x="949" y="606" text-anchor="middle" font-family="Liberation Sans" font-weight="bold" font-size="16.5" fill="#fff">H</text><text x="1249" y="629" text-anchor="middle" font-family="Liberation Sans" font-weight="bold" font-size="16.5" fill="#fff">L</text><text x="56" y="464.4" text-anchor="end" font-family="Liberation Sans" font-size="17" fill="#fff">10</text><text x="56" y="502.7" text-anchor="end" font-family="Liberation Sans" font-size="17" fill="#fff">5</text><text x="56" y="541.0" text-anchor="end" font-family="Liberation Sans" font-size="17" fill="#fff">0dB</text><text x="56" y="579.3" text-anchor="end" font-family="Liberation Sans" font-size="17" fill="#fff">-5</text><text x="56" y="617.6" text-anchor="end" font-family="Liberation Sans" font-size="17" fill="#fff">-10</text><text x="56" y="655.9" text-anchor="end" font-family="Liberation Sans" font-size="17" fill="#fff">-15</text><text x="64" y="692" text-anchor="middle" font-family="Liberation Sans" font-size="17" fill="#fff">20</text><text x="169" y="692" text-anchor="middle" font-family="Liberation Sans" font-size="17" fill="#fff">30</text><text x="244" y="692" text-anchor="middle" font-family="Liberation Sans" font-size="17" fill="#fff">40</text><text x="304" y="692" text-anchor="middle" font-family="Liberation Sans" font-size="17" fill="#fff">50</text><text x="391" y="692" text-anchor="middle" font-family="Liberation Sans" font-size="17" fill="#fff">70</text><text x="481" y="692" text-anchor="middle" font-family="Liberation Sans" font-size="17" fill="#fff">100</text><text x="665" y="692" text-anchor="middle" font-family="Liberation Sans" font-size="17" fill="#fff">200</text><text x="770" y="692" text-anchor="middle" font-family="Liberation Sans" font-size="17" fill="#fff">300</text><text x="905" y="692" text-anchor="middle" font-family="Liberation Sans" font-size="17" fill="#fff">500</text><text x="993" y="692" text-anchor="middle" font-family="Liberation Sans" font-size="17" fill="#fff">700</text><text x="1085" y="692" text-anchor="middle" font-family="Liberation Sans" font-size="17" fill="#fff">1K</text><text x="1268" y="692" text-anchor="middle" font-family="Liberation Sans" font-size="17" fill="#fff">2K</text><text x="1373" y="692" text-anchor="middle" font-family="Liberation Sans" font-size="17" fill="#fff">3K</text><text x="1448" y="692" text-anchor="middle" font-family="Liberation Sans" font-size="17" fill="#fff">4K</text><text x="1508" y="692" text-anchor="middle" font-family="Liberation Sans" font-size="17" fill="#fff">5K</text><text x="1595" y="692" text-anchor="middle" font-family="Liberation Sans" font-size="17" fill="#fff">7K</text><text x="1687" y="692" text-anchor="middle" font-family="Liberation Sans" font-size="17" fill="#fff">10K</text><text x="1846" y="692" text-anchor="middle" font-family="Liberation Sans" font-size="17" fill="#fff">20K</text><text x="30.5" y="728" text-anchor="middle" font-family="Liberation Sans" font-size="17" fill="#fff">ID</text><text x="30.3" y="759" text-anchor="middle" font-family="Liberation Sans" font-size="17" fill="#fff">Freq</text><text x="30.6" y="792" text-anchor="middle" font-family="Liberation Sans" font-size="17" fill="#fff">Q</text><text x="30.9" y="823" text-anchor="middle" font-family="Liberation Sans" font-size="17" fill="#fff">Gain</text><text x="31" y="987" text-anchor="middle" font-family="Liberation Sans" font-size="17" fill="#fff">BP</text><text x="81.5" y="728" text-anchor="middle" font-family="Liberation Sans" font-size="16" fill="#fff">1</text><text x="81.5" y="758" text-anchor="middle" font-family="Liberation Sans" font-size="14" fill="#a6a6a6">20</text><text x="81.5" y="790" text-anchor="middle" font-family="Liberation Sans" font-size="14" fill="#a6a6a6">5.80</text><text x="81.5" y="822" text-anchor="middle" font-family="Liberation Sans" font-size="14" fill="#fff">0.0</text><rect x="79.0" y="840" width="5" height="45" fill="#151515"/><rect x="79.0" y="898" width="5" height="68" fill="#1fa81f"/><circle cx="81.5" cy="891.5" r="14" fill="#4d4d4d" stroke="#0e0e0e" stroke-width="2"/><circle cx="81.5" cy="891.5" r="8.5" fill="#c2c2c2"/><circle cx="81.5" cy="987" r="6.8" fill="#6a6e76" stroke="#111" stroke-width="1.5"/><text x="139.8" y="728" text-anchor="middle" font-family="Liberation Sans" font-size="16" fill="#fff">2</text><text x="139.8" y="758" text-anchor="middle" font-family="Liberation Sans" font-size="14" fill="#a6a6a6">25</text><text x="139.8" y="790" text-anchor="middle" font-family="Liberation Sans" font-size="14" fill="#a6a6a6">5.80</text><text x="139.8" y="822" text-anchor="middle" font-family="Liberation Sans" font-size="14" fill="#fff">0.0</text><rect x="136.0" y="840" width="5" height="45" fill="#151515"/><rect x="136.0" y="898" width="5" height="68" fill="#1fa81f"/><circle cx="138.5" cy="891.5" r="14" fill="#4d4d4d" stroke="#0e0e0e" stroke-width="2"/><circle cx="138.5" cy="891.5" r="8.5" fill="#c2c2c2"/><circle cx="138.5" cy="987" r="6.8" fill="#6a6e76" stroke="#111" stroke-width="1.5"/><text x="198.8" y="728" text-anchor="middle" font-family="Liberation Sans" font-size="16" fill="#fff">3</text><text x="198.8" y="758" text-anchor="middle" font-family="Liberation Sans" font-size="14" fill="#a6a6a6">31</text><text x="198.8" y="790" text-anchor="middle" font-family="Liberation Sans" font-size="14" fill="#a6a6a6">5.80</text><text x="198.8" y="822" text-anchor="middle" font-family="Liberation Sans" font-size="14" fill="#fff">0.0</text><rect x="195.0" y="840" width="5" height="45" fill="#151515"/><rect x="195.0" y="898" width="5" height="68" fill="#1fa81f"/><circle cx="197.5" cy="891.5" r="14" fill="#4d4d4d" stroke="#0e0e0e" stroke-width="2"/><circle cx="197.5" cy="891.5" r="8.5" fill="#c2c2c2"/><circle cx="197.5" cy="987" r="6.8" fill="#6a6e76" stroke="#111" stroke-width="1.5"/><text x="255.8" y="728" text-anchor="middle" font-family="Liberation Sans" font-size="16" fill="#fff">4</text><text x="255.8" y="758" text-anchor="middle" font-family="Liberation Sans" font-size="14" fill="#a6a6a6">40</text><text x="255.8" y="790" text-anchor="middle" font-family="Liberation Sans" font-size="14" fill="#a6a6a6">5.80</text><text x="255.8" y="822" text-anchor="middle" font-family="Liberation Sans" font-size="14" fill="#fff">0.0</text><rect x="252.0" y="840" width="5" height="45" fill="#151515"/><rect x="252.0" y="898" width="5" height="68" fill="#1fa81f"/><circle cx="254.5" cy="891.5" r="14" fill="#4d4d4d" stroke="#0e0e0e" stroke-width="2"/><circle cx="254.5" cy="891.5" r="8.5" fill="#c2c2c2"/><circle cx="254.5" cy="987" r="6.8" fill="#6a6e76" stroke="#111" stroke-width="1.5"/><text x="314.8" y="728" text-anchor="middle" font-family="Liberation Sans" font-size="16" fill="#fff">5</text><text x="314.8" y="758" text-anchor="middle" font-family="Liberation Sans" font-size="14" fill="#a6a6a6">50</text><text x="314.8" y="790" text-anchor="middle" font-family="Liberation Sans" font-size="14" fill="#a6a6a6">5.80</text><text x="314.8" y="822" text-anchor="middle" font-family="Liberation Sans" font-size="14" fill="#fff">0.0</text><rect x="311.0" y="840" width="5" height="45" fill="#151515"/><rect x="311.0" y="898" width="5" height="68" fill="#1fa81f"/><circle cx="313.5" cy="891.5" r="14" fill="#4d4d4d" stroke="#0e0e0e" stroke-width="2"/><circle cx="313.5" cy="891.5" r="8.5" fill="#c2c2c2"/><circle cx="313.5" cy="987" r="6.8" fill="#6a6e76" stroke="#111" stroke-width="1.5"/><text x="371.8" y="728" text-anchor="middle" font-family="Liberation Sans" font-size="16" fill="#fff">6</text><text x="371.8" y="758" text-anchor="middle" font-family="Liberation Sans" font-size="14" fill="#a6a6a6">63</text><text x="371.8" y="790" text-anchor="middle" font-family="Liberation Sans" font-size="14" fill="#a6a6a6">5.80</text><text x="371.8" y="822" text-anchor="middle" font-family="Liberation Sans" font-size="14" fill="#fff">0.0</text><rect x="368.0" y="840" width="5" height="45" fill="#151515"/><rect x="368.0" y="898" width="5" height="68" fill="#1fa81f"/><circle cx="370.5" cy="891.5" r="14" fill="#4d4d4d" stroke="#0e0e0e" stroke-width="2"/><circle cx="370.5" cy="891.5" r="8.5" fill="#c2c2c2"/><circle cx="370.5" cy="987" r="6.8" fill="#6a6e76" stroke="#111" stroke-width="1.5"/><text x="430.8" y="728" text-anchor="middle" font-family="Liberation Sans" font-size="16" fill="#fff">7</text><text x="430.8" y="758" text-anchor="middle" font-family="Liberation Sans" font-size="14" fill="#a6a6a6">80</text><text x="430.8" y="790" text-anchor="middle" font-family="Liberation Sans" font-size="14" fill="#a6a6a6">5.80</text><text x="430.8" y="822" text-anchor="middle" font-family="Liberation Sans" font-size="14" fill="#fff">0.0</text><rect x="427.0" y="840" width="5" height="45" fill="#151515"/><rect x="427.0" y="898" width="5" height="68" fill="#1fa81f"/><circle cx="429.5" cy="891.5" r="14" fill="#4d4d4d" stroke="#0e0e0e" stroke-width="2"/><circle cx="429.5" cy="891.5" r="8.5" fill="#c2c2c2"/><circle cx="429.5" cy="987" r="6.8" fill="#6a6e76" stroke="#111" stroke-width="1.5"/><text x="487.8" y="728" text-anchor="middle" font-family="Liberation Sans" font-size="16" fill="#fff">8</text><text x="487.8" y="758" text-anchor="middle" font-family="Liberation Sans" font-size="14" fill="#a6a6a6">100</text><text x="487.8" y="790" text-anchor="middle" font-family="Liberation Sans" font-size="14" fill="#a6a6a6">5.80</text><text x="487.8" y="822" text-anchor="middle" font-family="Liberation Sans" font-size="14" fill="#fff">0.0</text><rect x="484.0" y="840" width="5" height="45" fill="#151515"/><rect x="484.0" y="898" width="5" height="68" fill="#1fa81f"/><circle cx="486.5" cy="891.5" r="14" fill="#4d4d4d" stroke="#0e0e0e" stroke-width="2"/><circle cx="486.5" cy="891.5" r="8.5" fill="#c2c2c2"/><circle cx="486.5" cy="987" r="6.8" fill="#6a6e76" stroke="#111" stroke-width="1.5"/><text x="546.8" y="728" text-anchor="middle" font-family="Liberation Sans" font-size="16" fill="#fff">9</text><text x="546.8" y="758" text-anchor="middle" font-family="Liberation Sans" font-size="14" fill="#a6a6a6">125</text><text x="546.8" y="790" text-anchor="middle" font-family="Liberation Sans" font-size="14" fill="#a6a6a6">5.80</text><text x="546.8" y="822" text-anchor="middle" font-family="Liberation Sans" font-size="14" fill="#fff">0.0</text><rect x="543.0" y="840" width="5" height="45" fill="#151515"/><rect x="543.0" y="898" width="5" height="68" fill="#1fa81f"/><circle cx="545.5" cy="891.5" r="14" fill="#4d4d4d" stroke="#0e0e0e" stroke-width="2"/><circle cx="545.5" cy="891.5" r="8.5" fill="#c2c2c2"/><circle cx="545.5" cy="987" r="6.8" fill="#6a6e76" stroke="#111" stroke-width="1.5"/><text x="603.8" y="728" text-anchor="middle" font-family="Liberation Sans" font-size="16" fill="#fff">10</text><text x="603.8" y="758" text-anchor="middle" font-family="Liberation Sans" font-size="14" fill="#a6a6a6">160</text><text x="603.8" y="790" text-anchor="middle" font-family="Liberation Sans" font-size="14" fill="#a6a6a6">5.80</text><text x="603.8" y="822" text-anchor="middle" font-family="Liberation Sans" font-size="14" fill="#fff">0.0</text><rect x="600.0" y="840" width="5" height="45" fill="#151515"/><rect x="600.0" y="898" width="5" height="68" fill="#1fa81f"/><circle cx="602.5" cy="891.5" r="14" fill="#4d4d4d" stroke="#0e0e0e" stroke-width="2"/><circle cx="602.5" cy="891.5" r="8.5" fill="#c2c2c2"/><circle cx="602.5" cy="987" r="6.8" fill="#6a6e76" stroke="#111" stroke-width="1.5"/><text x="662.8" y="728" text-anchor="middle" font-family="Liberation Sans" font-size="16" fill="#fff">11</text><text x="662.8" y="758" text-anchor="middle" font-family="Liberation Sans" font-size="14" fill="#a6a6a6">200</text><text x="662.8" y="790" text-anchor="middle" font-family="Liberation Sans" font-size="14" fill="#a6a6a6">5.80</text><text x="662.8" y="822" text-anchor="middle" font-family="Liberation Sans" font-size="14" fill="#fff">0.0</text><rect x="659.0" y="840" width="5" height="45" fill="#151515"/><rect x="659.0" y="898" width="5" height="68" fill="#1fa81f"/><circle cx="661.5" cy="891.5" r="14" fill="#4d4d4d" stroke="#0e0e0e" stroke-width="2"/><circle cx="661.5" cy="891.5" r="8.5" fill="#c2c2c2"/><circle cx="661.5" cy="987" r="6.8" fill="#6a6e76" stroke="#111" stroke-width="1.5"/><text x="719.8" y="728" text-anchor="middle" font-family="Liberation Sans" font-size="16" fill="#fff">12</text><text x="719.8" y="758" text-anchor="middle" font-family="Liberation Sans" font-size="14" fill="#a6a6a6">250</text><text x="719.8" y="790" text-anchor="middle" font-family="Liberation Sans" font-size="14" fill="#a6a6a6">5.80</text><text x="719.8" y="822" text-anchor="middle" font-family="Liberation Sans" font-size="14" fill="#fff">0.0</text><rect x="716.0" y="840" width="5" height="45" fill="#151515"/><rect x="716.0" y="898" width="5" height="68" fill="#1fa81f"/><circle cx="718.5" cy="891.5" r="14" fill="#4d4d4d" stroke="#0e0e0e" stroke-width="2"/><circle cx="718.5" cy="891.5" r="8.5" fill="#c2c2c2"/><circle cx="718.5" cy="987" r="6.8" fill="#6a6e76" stroke="#111" stroke-width="1.5"/><text x="778.8" y="728" text-anchor="middle" font-family="Liberation Sans" font-size="16" fill="#fff">13</text><text x="778.8" y="758" text-anchor="middle" font-family="Liberation Sans" font-size="14" fill="#a6a6a6">315</text><text x="778.8" y="790" text-anchor="middle" font-family="Liberation Sans" font-size="14" fill="#a6a6a6">5.80</text><text x="778.8" y="822" text-anchor="middle" font-family="Liberation Sans" font-size="14" fill="#fff">0.0</text><rect x="775.0" y="840" width="5" height="45" fill="#151515"/><rect x="775.0" y="898" width="5" height="68" fill="#1fa81f"/><circle cx="777.5" cy="891.5" r="14" fill="#4d4d4d" stroke="#0e0e0e" stroke-width="2"/><circle cx="777.5" cy="891.5" r="8.5" fill="#c2c2c2"/><circle cx="777.5" cy="987" r="6.8" fill="#6a6e76" stroke="#111" stroke-width="1.5"/><text x="835.8" y="728" text-anchor="middle" font-family="Liberation Sans" font-size="16" fill="#fff">14</text><text x="835.8" y="758" text-anchor="middle" font-family="Liberation Sans" font-size="14" fill="#a6a6a6">400</text><text x="835.8" y="790" text-anchor="middle" font-family="Liberation Sans" font-size="14" fill="#a6a6a6">5.80</text><text x="835.8" y="822" text-anchor="middle" font-family="Liberation Sans" font-size="14" fill="#fff">0.0</text><rect x="832.0" y="840" width="5" height="45" fill="#151515"/><rect x="832.0" y="898" width="5" height="68" fill="#1fa81f"/><circle cx="834.5" cy="891.5" r="14" fill="#4d4d4d" stroke="#0e0e0e" stroke-width="2"/><circle cx="834.5" cy="891.5" r="8.5" fill="#c2c2c2"/><circle cx="834.5" cy="987" r="6.8" fill="#6a6e76" stroke="#111" stroke-width="1.5"/><text x="894.8" y="728" text-anchor="middle" font-family="Liberation Sans" font-size="16" fill="#fff">15</text><text x="894.8" y="758" text-anchor="middle" font-family="Liberation Sans" font-size="14" fill="#a6a6a6">500</text><text x="894.8" y="790" text-anchor="middle" font-family="Liberation Sans" font-size="14" fill="#a6a6a6">5.80</text><text x="894.8" y="822" text-anchor="middle" font-family="Liberation Sans" font-size="14" fill="#fff">0.0</text><rect x="891.0" y="840" width="5" height="45" fill="#151515"/><rect x="891.0" y="898" width="5" height="68" fill="#1fa81f"/><circle cx="893.5" cy="891.5" r="14" fill="#4d4d4d" stroke="#0e0e0e" stroke-width="2"/><circle cx="893.5" cy="891.5" r="8.5" fill="#c2c2c2"/><circle cx="893.5" cy="987" r="6.8" fill="#6a6e76" stroke="#111" stroke-width="1.5"/><text x="951.8" y="728" text-anchor="middle" font-family="Liberation Sans" font-size="16" fill="#fff">16</text><text x="951.8" y="758" text-anchor="middle" font-family="Liberation Sans" font-size="14" fill="#a6a6a6">630</text><text x="951.8" y="790" text-anchor="middle" font-family="Liberation Sans" font-size="14" fill="#a6a6a6">5.80</text><text x="951.8" y="822" text-anchor="middle" font-family="Liberation Sans" font-size="14" fill="#fff">0.0</text><rect x="948.0" y="840" width="5" height="45" fill="#151515"/><rect x="948.0" y="898" width="5" height="68" fill="#1fa81f"/><circle cx="950.5" cy="891.5" r="14" fill="#4d4d4d" stroke="#0e0e0e" stroke-width="2"/><circle cx="950.5" cy="891.5" r="8.5" fill="#c2c2c2"/><circle cx="950.5" cy="987" r="6.8" fill="#6a6e76" stroke="#111" stroke-width="1.5"/><text x="1010.8" y="728" text-anchor="middle" font-family="Liberation Sans" font-size="16" fill="#fff">17</text><text x="1010.8" y="758" text-anchor="middle" font-family="Liberation Sans" font-size="14" fill="#a6a6a6">800</text><text x="1010.8" y="790" text-anchor="middle" font-family="Liberation Sans" font-size="14" fill="#a6a6a6">5.80</text><text x="1010.8" y="822" text-anchor="middle" font-family="Liberation Sans" font-size="14" fill="#fff">0.0</text><rect x="1007.0" y="840" width="5" height="45" fill="#151515"/><rect x="1007.0" y="898" width="5" height="68" fill="#1fa81f"/><circle cx="1009.5" cy="891.5" r="14" fill="#4d4d4d" stroke="#0e0e0e" stroke-width="2"/><circle cx="1009.5" cy="891.5" r="8.5" fill="#c2c2c2"/><circle cx="1009.5" cy="987" r="6.8" fill="#6a6e76" stroke="#111" stroke-width="1.5"/><text x="1068.8" y="728" text-anchor="middle" font-family="Liberation Sans" font-size="16" fill="#fff">18</text><text x="1068.8" y="758" text-anchor="middle" font-family="Liberation Sans" font-size="14" fill="#a6a6a6">1000</text><text x="1068.8" y="790" text-anchor="middle" font-family="Liberation Sans" font-size="14" fill="#a6a6a6">5.80</text><text x="1068.8" y="822" text-anchor="middle" font-family="Liberation Sans" font-size="14" fill="#fff">0.0</text><rect x="1065.0" y="840" width="5" height="45" fill="#151515"/><rect x="1065.0" y="898" width="5" height="68" fill="#1fa81f"/><circle cx="1067.5" cy="891.5" r="14" fill="#4d4d4d" stroke="#0e0e0e" stroke-width="2"/><circle cx="1067.5" cy="891.5" r="8.5" fill="#c2c2c2"/><circle cx="1067.5" cy="987" r="6.8" fill="#6a6e76" stroke="#111" stroke-width="1.5"/><text x="1128.8" y="728" text-anchor="middle" font-family="Liberation Sans" font-size="16" fill="#fff">19</text><text x="1128.8" y="758" text-anchor="middle" font-family="Liberation Sans" font-size="14" fill="#a6a6a6">1250</text><text x="1128.8" y="790" text-anchor="middle" font-family="Liberation Sans" font-size="14" fill="#a6a6a6">5.80</text><text x="1128.8" y="822" text-anchor="middle" font-family="Liberation Sans" font-size="14" fill="#fff">0.0</text><rect x="1125.0" y="840" width="5" height="45" fill="#151515"/><rect x="1125.0" y="898" width="5" height="68" fill="#1fa81f"/><circle cx="1127.5" cy="891.5" r="14" fill="#4d4d4d" stroke="#0e0e0e" stroke-width="2"/><circle cx="1127.5" cy="891.5" r="8.5" fill="#c2c2c2"/><circle cx="1127.5" cy="987" r="6.8" fill="#6a6e76" stroke="#111" stroke-width="1.5"/><text x="1187.8" y="728" text-anchor="middle" font-family="Liberation Sans" font-size="16" fill="#fff">20</text><text x="1187.8" y="758" text-anchor="middle" font-family="Liberation Sans" font-size="14" fill="#a6a6a6">1600</text><text x="1187.8" y="790" text-anchor="middle" font-family="Liberation Sans" font-size="14" fill="#a6a6a6">5.80</text><text x="1187.8" y="822" text-anchor="middle" font-family="Liberation Sans" font-size="14" fill="#fff">0.0</text><rect x="1184.0" y="840" width="5" height="45" fill="#151515"/><rect x="1184.0" y="898" width="5" height="68" fill="#1fa81f"/><circle cx="1186.5" cy="891.5" r="14" fill="#4d4d4d" stroke="#0e0e0e" stroke-width="2"/><circle cx="1186.5" cy="891.5" r="8.5" fill="#c2c2c2"/><circle cx="1186.5" cy="987" r="6.8" fill="#6a6e76" stroke="#111" stroke-width="1.5"/><text x="1246.8" y="728" text-anchor="middle" font-family="Liberation Sans" font-size="16" fill="#fff">21</text><text x="1246.8" y="758" text-anchor="middle" font-family="Liberation Sans" font-size="14" fill="#a6a6a6">2000</text><text x="1246.8" y="790" text-anchor="middle" font-family="Liberation Sans" font-size="14" fill="#a6a6a6">5.80</text><text x="1246.8" y="822" text-anchor="middle" font-family="Liberation Sans" font-size="14" fill="#fff">0.0</text><rect x="1243.0" y="840" width="5" height="45" fill="#151515"/><rect x="1243.0" y="898" width="5" height="68" fill="#1fa81f"/><circle cx="1245.5" cy="891.5" r="14" fill="#4d4d4d" stroke="#0e0e0e" stroke-width="2"/><circle cx="1245.5" cy="891.5" r="8.5" fill="#c2c2c2"/><circle cx="1245.5" cy="987" r="6.8" fill="#6a6e76" stroke="#111" stroke-width="1.5"/><text x="1305.8" y="728" text-anchor="middle" font-family="Liberation Sans" font-size="16" fill="#fff">22</text><text x="1305.8" y="758" text-anchor="middle" font-family="Liberation Sans" font-size="14" fill="#a6a6a6">2500</text><text x="1305.8" y="790" text-anchor="middle" font-family="Liberation Sans" font-size="14" fill="#a6a6a6">5.80</text><text x="1305.8" y="822" text-anchor="middle" font-family="Liberation Sans" font-size="14" fill="#fff">0.0</text><rect x="1302.0" y="840" width="5" height="45" fill="#151515"/><rect x="1302.0" y="898" width="5" height="68" fill="#1fa81f"/><circle cx="1304.5" cy="891.5" r="14" fill="#4d4d4d" stroke="#0e0e0e" stroke-width="2"/><circle cx="1304.5" cy="891.5" r="8.5" fill="#c2c2c2"/><circle cx="1304.5" cy="987" r="6.8" fill="#6a6e76" stroke="#111" stroke-width="1.5"/><text x="1364.8" y="728" text-anchor="middle" font-family="Liberation Sans" font-size="16" fill="#fff">23</text><text x="1364.8" y="758" text-anchor="middle" font-family="Liberation Sans" font-size="14" fill="#a6a6a6">3150</text><text x="1364.8" y="790" text-anchor="middle" font-family="Liberation Sans" font-size="14" fill="#a6a6a6">5.80</text><text x="1364.8" y="822" text-anchor="middle" font-family="Liberation Sans" font-size="14" fill="#fff">0.0</text><rect x="1361.0" y="840" width="5" height="45" fill="#151515"/><rect x="1361.0" y="898" width="5" height="68" fill="#1fa81f"/><circle cx="1363.5" cy="891.5" r="14" fill="#4d4d4d" stroke="#0e0e0e" stroke-width="2"/><circle cx="1363.5" cy="891.5" r="8.5" fill="#c2c2c2"/><circle cx="1363.5" cy="987" r="6.8" fill="#6a6e76" stroke="#111" stroke-width="1.5"/><text x="1423.8" y="728" text-anchor="middle" font-family="Liberation Sans" font-size="16" fill="#fff">24</text><text x="1423.8" y="758" text-anchor="middle" font-family="Liberation Sans" font-size="14" fill="#a6a6a6">4000</text><text x="1423.8" y="790" text-anchor="middle" font-family="Liberation Sans" font-size="14" fill="#a6a6a6">5.80</text><text x="1423.8" y="822" text-anchor="middle" font-family="Liberation Sans" font-size="14" fill="#fff">0.0</text><rect x="1420.0" y="840" width="5" height="45" fill="#151515"/><rect x="1420.0" y="898" width="5" height="68" fill="#1fa81f"/><circle cx="1422.5" cy="891.5" r="14" fill="#4d4d4d" stroke="#0e0e0e" stroke-width="2"/><circle cx="1422.5" cy="891.5" r="8.5" fill="#c2c2c2"/><circle cx="1422.5" cy="987" r="6.8" fill="#6a6e76" stroke="#111" stroke-width="1.5"/><text x="1482.8" y="728" text-anchor="middle" font-family="Liberation Sans" font-size="16" fill="#fff">25</text><text x="1482.8" y="758" text-anchor="middle" font-family="Liberation Sans" font-size="14" fill="#a6a6a6">5000</text><text x="1482.8" y="790" text-anchor="middle" font-family="Liberation Sans" font-size="14" fill="#a6a6a6">5.80</text><text x="1482.8" y="822" text-anchor="middle" font-family="Liberation Sans" font-size="14" fill="#fff">0.0</text><rect x="1479.0" y="840" width="5" height="45" fill="#151515"/><rect x="1479.0" y="898" width="5" height="68" fill="#1fa81f"/><circle cx="1481.5" cy="891.5" r="14" fill="#4d4d4d" stroke="#0e0e0e" stroke-width="2"/><circle cx="1481.5" cy="891.5" r="8.5" fill="#c2c2c2"/><circle cx="1481.5" cy="987" r="6.8" fill="#6a6e76" stroke="#111" stroke-width="1.5"/><text x="1541.8" y="728" text-anchor="middle" font-family="Liberation Sans" font-size="16" fill="#fff">26</text><text x="1541.8" y="758" text-anchor="middle" font-family="Liberation Sans" font-size="14" fill="#a6a6a6">6300</text><text x="1541.8" y="790" text-anchor="middle" font-family="Liberation Sans" font-size="14" fill="#a6a6a6">5.80</text><text x="1541.8" y="822" text-anchor="middle" font-family="Liberation Sans" font-size="14" fill="#fff">0.0</text><rect x="1538.0" y="840" width="5" height="45" fill="#151515"/><rect x="1538.0" y="898" width="5" height="68" fill="#1fa81f"/><circle cx="1540.5" cy="891.5" r="14" fill="#4d4d4d" stroke="#0e0e0e" stroke-width="2"/><circle cx="1540.5" cy="891.5" r="8.5" fill="#c2c2c2"/><circle cx="1540.5" cy="987" r="6.8" fill="#6a6e76" stroke="#111" stroke-width="1.5"/><text x="1600.8" y="728" text-anchor="middle" font-family="Liberation Sans" font-size="16" fill="#fff">27</text><text x="1600.8" y="758" text-anchor="middle" font-family="Liberation Sans" font-size="14" fill="#a6a6a6">8000</text><text x="1600.8" y="790" text-anchor="middle" font-family="Liberation Sans" font-size="14" fill="#a6a6a6">5.80</text><text x="1600.8" y="822" text-anchor="middle" font-family="Liberation Sans" font-size="14" fill="#fff">0.0</text><rect x="1597.0" y="840" width="5" height="45" fill="#151515"/><rect x="1597.0" y="898" width="5" height="68" fill="#1fa81f"/><circle cx="1599.5" cy="891.5" r="14" fill="#4d4d4d" stroke="#0e0e0e" stroke-width="2"/><circle cx="1599.5" cy="891.5" r="8.5" fill="#c2c2c2"/><circle cx="1599.5" cy="987" r="6.8" fill="#6a6e76" stroke="#111" stroke-width="1.5"/><text x="1659.8" y="728" text-anchor="middle" font-family="Liberation Sans" font-size="16" fill="#fff">28</text><text x="1659.8" y="758" text-anchor="middle" font-family="Liberation Sans" font-size="14" fill="#a6a6a6">10000</text><text x="1659.8" y="790" text-anchor="middle" font-family="Liberation Sans" font-size="14" fill="#a6a6a6">5.80</text><text x="1659.8" y="822" text-anchor="middle" font-family="Liberation Sans" font-size="14" fill="#fff">0.0</text><rect x="1656.0" y="840" width="5" height="45" fill="#151515"/><rect x="1656.0" y="898" width="5" height="68" fill="#1fa81f"/><circle cx="1658.5" cy="891.5" r="14" fill="#4d4d4d" stroke="#0e0e0e" stroke-width="2"/><circle cx="1658.5" cy="891.5" r="8.5" fill="#c2c2c2"/><circle cx="1658.5" cy="987" r="6.8" fill="#6a6e76" stroke="#111" stroke-width="1.5"/><text x="1718.8" y="728" text-anchor="middle" font-family="Liberation Sans" font-size="16" fill="#fff">29</text><text x="1718.8" y="758" text-anchor="middle" font-family="Liberation Sans" font-size="14" fill="#a6a6a6">12500</text><text x="1718.8" y="790" text-anchor="middle" font-family="Liberation Sans" font-size="14" fill="#a6a6a6">5.80</text><text x="1718.8" y="822" text-anchor="middle" font-family="Liberation Sans" font-size="14" fill="#fff">0.0</text><rect x="1715.0" y="840" width="5" height="45" fill="#151515"/><rect x="1715.0" y="898" width="5" height="68" fill="#1fa81f"/><circle cx="1717.5" cy="891.5" r="14" fill="#4d4d4d" stroke="#0e0e0e" stroke-width="2"/><circle cx="1717.5" cy="891.5" r="8.5" fill="#c2c2c2"/><circle cx="1717.5" cy="987" r="6.8" fill="#6a6e76" stroke="#111" stroke-width="1.5"/><text x="1777.8" y="728" text-anchor="middle" font-family="Liberation Sans" font-size="16" fill="#fff">30</text><text x="1777.8" y="758" text-anchor="middle" font-family="Liberation Sans" font-size="14" fill="#a6a6a6">16000</text><text x="1777.8" y="790" text-anchor="middle" font-family="Liberation Sans" font-size="14" fill="#a6a6a6">5.80</text><text x="1777.8" y="822" text-anchor="middle" font-family="Liberation Sans" font-size="14" fill="#fff">0.0</text><rect x="1774.0" y="840" width="5" height="45" fill="#151515"/><rect x="1774.0" y="898" width="5" height="68" fill="#1fa81f"/><circle cx="1776.5" cy="891.5" r="14" fill="#4d4d4d" stroke="#0e0e0e" stroke-width="2"/><circle cx="1776.5" cy="891.5" r="8.5" fill="#c2c2c2"/><circle cx="1776.5" cy="987" r="6.8" fill="#6a6e76" stroke="#111" stroke-width="1.5"/><text x="1836.8" y="728" text-anchor="middle" font-family="Liberation Sans" font-size="16" fill="#fff">31</text><text x="1836.8" y="758" text-anchor="middle" font-family="Liberation Sans" font-size="14" fill="#a6a6a6">20000</text><text x="1836.8" y="790" text-anchor="middle" font-family="Liberation Sans" font-size="14" fill="#a6a6a6">5.80</text><text x="1836.8" y="822" text-anchor="middle" font-family="Liberation Sans" font-size="14" fill="#fff">0.0</text><rect x="1833.0" y="840" width="5" height="45" fill="#151515"/><rect x="1833.0" y="898" width="5" height="68" fill="#1fa81f"/><circle cx="1835.5" cy="891.5" r="14" fill="#4d4d4d" stroke="#0e0e0e" stroke-width="2"/><circle cx="1835.5" cy="891.5" r="8.5" fill="#c2c2c2"/><circle cx="1835.5" cy="987" r="6.8" fill="#6a6e76" stroke="#111" stroke-width="1.5"/></svg>
</body></html>
